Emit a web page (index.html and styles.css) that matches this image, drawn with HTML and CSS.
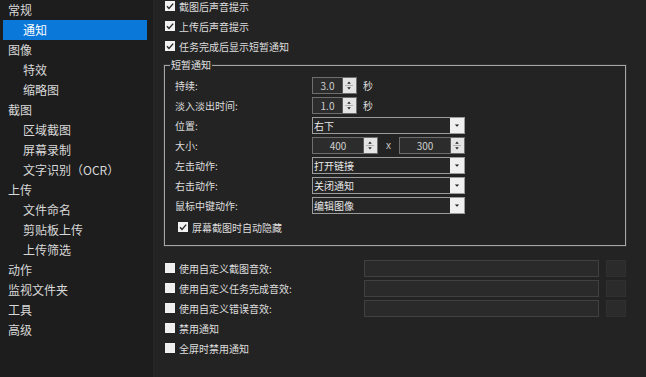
FILE: index.html
```html
<!DOCTYPE html>
<html lang="zh">
<head>
<meta charset="utf-8">
<title>通知</title>
<link rel="stylesheet" href="styles.css">
</head>
<body>
<div class="app">
  <nav class="sidebar">
    <div class="item">常规</div>
    <div class="item sub sel">通知</div>
    <div class="item">图像</div>
    <div class="item sub">特效</div>
    <div class="item sub">缩略图</div>
    <div class="item">截图</div>
    <div class="item sub">区域截图</div>
    <div class="item sub">屏幕录制</div>
    <div class="item sub">文字识别（OCR）</div>
    <div class="item">上传</div>
    <div class="item sub">文件命名</div>
    <div class="item sub">剪贴板上传</div>
    <div class="item sub">上传筛选</div>
    <div class="item">动作</div>
    <div class="item">监视文件夹</div>
    <div class="item">工具</div>
    <div class="item">高级</div>
  </nav>
  <main class="content">
    <div class="checks">
      <label class="cb"><span class="box"><svg viewBox="0 0 10 10"><polyline points="2,5.2 4,7.4 8.2,2.6"/></svg></span>截图后声音提示</label>
      <label class="cb"><span class="box"><svg viewBox="0 0 10 10"><polyline points="2,5.2 4,7.4 8.2,2.6"/></svg></span>上传后声音提示</label>
      <label class="cb"><span class="box"><svg viewBox="0 0 10 10"><polyline points="2,5.2 4,7.4 8.2,2.6"/></svg></span>任务完成后显示短暂通知</label>
    </div>
    <fieldset class="group">
      <legend>短暂通知</legend>
      <div class="grid">
        <span class="lbl">持续:</span>
        <div class="ctl">
          <span class="spin small"><span class="val">3.0</span><span class="btns"><svg viewBox="0 0 13 17"><polygon points="4.5,6.5 6.5,4 8.5,6.5"/><line x1="2" y1="8.5" x2="11" y2="8.5"/><polygon points="4.5,10.5 8.5,10.5 6.5,13"/></svg></span></span>
          <span class="unit">秒</span>
        </div>
        <span class="lbl">淡入淡出时间:</span>
        <div class="ctl">
          <span class="spin small"><span class="val">1.0</span><span class="btns"><svg viewBox="0 0 13 17"><polygon points="4.5,6.5 6.5,4 8.5,6.5"/><line x1="2" y1="8.5" x2="11" y2="8.5"/><polygon points="4.5,10.5 8.5,10.5 6.5,13"/></svg></span></span>
          <span class="unit">秒</span>
        </div>
        <span class="lbl">位置:</span>
        <div class="ctl"><span class="combo"><span class="ctext">右下</span><span class="arrow"><svg viewBox="0 0 15 17"><polygon points="5,7.5 10,7.5 7.5,10"/></svg></span></span></div>
        <span class="lbl">大小:</span>
        <div class="ctl">
          <span class="spin wide"><span class="val">400</span><span class="btns"><svg viewBox="0 0 13 17"><polygon points="4.5,6.5 6.5,4 8.5,6.5"/><line x1="2" y1="8.5" x2="11" y2="8.5"/><polygon points="4.5,10.5 8.5,10.5 6.5,13"/></svg></span></span>
          <span class="times">x</span>
          <span class="spin wide"><span class="val">300</span><span class="btns"><svg viewBox="0 0 13 17"><polygon points="4.5,6.5 6.5,4 8.5,6.5"/><line x1="2" y1="8.5" x2="11" y2="8.5"/><polygon points="4.5,10.5 8.5,10.5 6.5,13"/></svg></span></span>
        </div>
        <span class="lbl">左击动作:</span>
        <div class="ctl"><span class="combo"><span class="ctext">打开链接</span><span class="arrow"><svg viewBox="0 0 15 17"><polygon points="5,7.5 10,7.5 7.5,10"/></svg></span></span></div>
        <span class="lbl">右击动作:</span>
        <div class="ctl"><span class="combo"><span class="ctext">关闭通知</span><span class="arrow"><svg viewBox="0 0 15 17"><polygon points="5,7.5 10,7.5 7.5,10"/></svg></span></span></div>
        <span class="lbl">鼠标中键动作:</span>
        <div class="ctl"><span class="combo"><span class="ctext">编辑图像</span><span class="arrow"><svg viewBox="0 0 15 17"><polygon points="5,7.5 10,7.5 7.5,10"/></svg></span></span></div>
      </div>
      <label class="cb inner"><span class="box"><svg viewBox="0 0 10 10"><polyline points="2,5.2 4,7.4 8.2,2.6"/></svg></span>屏幕截图时自动隐藏</label>
    </fieldset>
    <div class="sounds">
      <div class="srow">
        <label class="cb"><span class="box off"></span>使用自定义截图音效:</label>
        <span class="path"></span><span class="browse"></span>
      </div>
      <div class="srow">
        <label class="cb"><span class="box off"></span>使用自定义任务完成音效:</label>
        <span class="path"></span><span class="browse"></span>
      </div>
      <div class="srow">
        <label class="cb"><span class="box off"></span>使用自定义错误音效:</label>
        <span class="path"></span><span class="browse"></span>
      </div>
      <div class="srow">
        <label class="cb"><span class="box off"></span>禁用通知</label>
      </div>
      <div class="srow">
        <label class="cb"><span class="box off"></span>全屏时禁用通知</label>
      </div>
    </div>
  </main>
</div>
</body>
</html>
```
FILE: styles.css
```css
* { box-sizing: border-box; }
html, body {
  margin: 0;
  padding: 0;
  background: #232323;
  overflow: hidden;
}
body {
  font-family: "Noto Sans CJK SC", "Noto Sans", sans-serif;
  color: #dedede;
}
.app {
  display: flex;
  width: 646px;
  height: 377px;
}
.sidebar {
  width: 155px;
  flex: none;
  background: #1d1d1d;
  border-right: 2px solid #262626;
  font-size: 12px;
  color: #d8d8d8;
}
.item {
  height: 20px;
  line-height: 20px;
  margin: 0 6px 0 3px;
  padding-left: 5px;
  white-space: nowrap;
}
.item.sub { padding-left: 20px; }
.item.sel {
  background: #0a78d8;
  color: #ffffff;
}
.content {
  flex: 1;
  padding: 0 20px 0 9px;
  font-size: 10px;
  background: #232323;
}
.checks {
  margin-top: -4px;
  padding-left: 1px;
}
.cb {
  display: flex;
  align-items: center;
  height: 20px;
  white-space: nowrap;
}
.box {
  width: 10px;
  height: 10px;
  flex: none;
  background: #f2f2f2;
  margin-right: 4px;
  display: flex;
}
.box svg {
  width: 10px;
  height: 10px;
}
.box polyline {
  fill: none;
  stroke: #2a2a2a;
  stroke-width: 1.4;
}
.box.off { background: #efefef; }
.group {
  margin: 3px 0 0 0;
  padding: 0 10px 8px 10px;
  border: 1px solid #a5a5a5;
  box-shadow: 0 0 0 1px #303030;
  width: 462px;
  min-width: 0;
}
.group legend {
  padding: 0 1px;
  margin-left: -5px;
  font-size: 10px;
  line-height: 12px;
  color: #e0e0e0;
}
.grid {
  display: grid;
  grid-template-columns: 137px auto;
  row-gap: 3px;
  padding-top: 6px;
  align-items: center;
}
.lbl {
  line-height: 17px;
  white-space: nowrap;
}
.ctl {
  display: flex;
  align-items: center;
  height: 17px;
}
.spin {
  display: flex;
  height: 17px;
  border: 1px solid #6e6e6e;
  background: #2c2c2c;
}
.spin.small { width: 45px; }
.spin.wide { width: 66px; }
.val {
  flex: 1;
  text-align: center;
  line-height: 15px;
  color: #d0d0d0;
  border-right: 1px solid #5a5a5a;
}
.btns {
  width: 13px;
  flex: none;
  background: #e4e4e4;
  display: flex;
}
.btns svg {
  width: 12px;
  height: 15px;
}
.btns polygon { fill: #1e1e1e; }
.btns line { stroke: #a8a8a8; stroke-width: 1; }
.unit { margin-left: 6px; }
.times {
  width: 21px;
  text-align: center;
  font-family: "Liberation Sans", sans-serif;
  color: #c8c8c8;
}
.combo {
  display: flex;
  width: 153px;
  height: 17px;
  border: 1px solid #9c9c9c;
  background: #262626;
}
.ctext {
  flex: 1;
  padding-left: 1px;
  line-height: 15px;
  color: #e6e6e6;
}
.arrow {
  width: 14px;
  flex: none;
  background: #f0f0f0;
  display: flex;
}
.arrow svg {
  width: 14px;
  height: 15px;
}
.arrow polygon { fill: #222; }
.cb.inner {
  margin-top: 3px;
  padding-left: 3px;
}
.sounds {
  margin-top: 12px;
  padding-left: 1px;
}
.srow {
  display: grid;
  grid-template-columns: 192px 235px 20px;
  column-gap: 7px;
  align-items: center;
  height: 20px;
}
.path {
  height: 17px;
  border: 1px solid #404040;
  background: #2a2a2a;
}
.browse {
  height: 17px;
  background: #2b2b2b;
  border: 1px solid #303030;
}
```
